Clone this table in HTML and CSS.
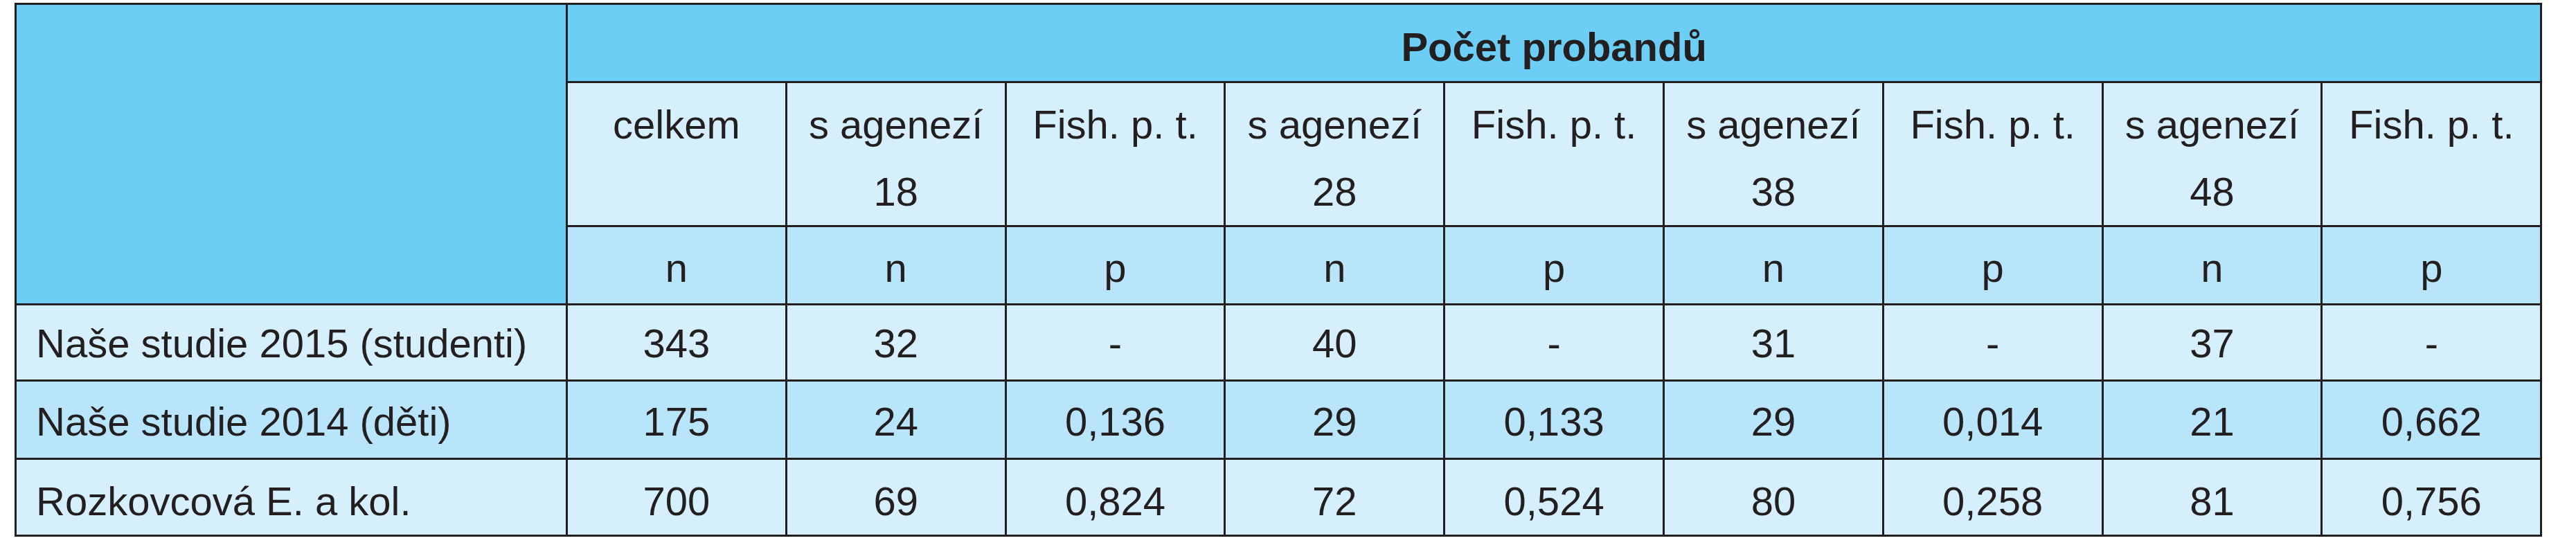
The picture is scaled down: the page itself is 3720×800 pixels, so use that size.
FILE: index.html
```html
<!DOCTYPE html>
<html lang="cs">
<head>
<meta charset="utf-8">
<title>Počet probandů</title>
<link rel="stylesheet" href="styles.css">
</head>
<body>
<table class="tbl">
  <colgroup>
    <col class="c-first">
    <col class="c-data"><col class="c-data"><col class="c-data">
    <col class="c-data"><col class="c-data"><col class="c-data">
    <col class="c-data"><col class="c-data"><col class="c-data">
  </colgroup>
  <thead>
    <tr class="r-head">
      <th class="corner" rowspan="3"></th>
      <th class="title" colspan="9">Počet probandů</th>
    </tr>
    <tr class="r-sub">
      <th>celkem</th>
      <th>s agenezí<br>18</th>
      <th>Fish. p. t.</th>
      <th>s agenezí<br>28</th>
      <th>Fish. p. t.</th>
      <th>s agenezí<br>38</th>
      <th>Fish. p. t.</th>
      <th>s agenezí<br>48</th>
      <th>Fish. p. t.</th>
    </tr>
    <tr class="r-unit">
      <th>n</th><th>n</th><th>p</th><th>n</th><th>p</th><th>n</th><th>p</th><th>n</th><th>p</th>
    </tr>
  </thead>
  <tbody>
    <tr class="r-d1">
      <td class="name">Naše studie 2015 (studenti)</td>
      <td>343</td><td>32</td><td>-</td><td>40</td><td>-</td><td>31</td><td>-</td><td>37</td><td>-</td>
    </tr>
    <tr class="r-d2">
      <td class="name">Naše studie 2014 (děti)</td>
      <td>175</td><td>24</td><td>0,136</td><td>29</td><td>0,133</td><td>29</td><td>0,014</td><td>21</td><td>0,662</td>
    </tr>
    <tr class="r-d3">
      <td class="name">Rozkovcová E. a kol.</td>
      <td>700</td><td>69</td><td>0,824</td><td>72</td><td>0,524</td><td>80</td><td>0,258</td><td>81</td><td>0,756</td>
    </tr>
  </tbody>
</table>
</body>
</html>
```

FILE: styles.css
```css
html, body {
  margin: 0;
  padding: 0;
  background: #ffffff;
}

body {
  font-family: "Liberation Sans", Arial, sans-serif;
  color: #231f20;
}

.tbl {
  margin: 4px 0 0 21px;
  border-collapse: separate;
  border-spacing: 0;
  table-layout: fixed;
  width: 3650px;
  border-top: 3px solid #231f20;
  border-left: 3px solid #231f20;
  font-size: 58px;
  line-height: 97px;
}

.c-first { width: 796px; }
.c-data { width: 316.8px; }

.tbl th,
.tbl td {
  border-right: 3px solid #231f20;
  border-bottom: 3px solid #231f20;
  padding: 0;
  text-align: center;
  vertical-align: top;
  font-weight: normal;
  white-space: nowrap;
}

.corner {
  background: #6dcef5;
}

.r-head th.title {
  background: #6dcef5;
  font-weight: bold;
  height: 98px;
  padding-top: 12px;
}

.r-sub th {
  background: #d5effc;
  height: 193px;
  padding-top: 11px;
}

.r-unit th {
  background: #b9e5fa;
  height: 100px;
  padding-top: 10px;
}

.r-d1 td {
  background: #d5effc;
  height: 101px;
  padding-top: 6px;
}

.r-d2 td {
  background: #b9e5fa;
  height: 101px;
  padding-top: 9px;
}

.r-d3 td {
  background: #d5effc;
  height: 96px;
  padding-top: 11px;
}

.tbl td.name {
  text-align: left;
  padding-left: 28px;
}
```
